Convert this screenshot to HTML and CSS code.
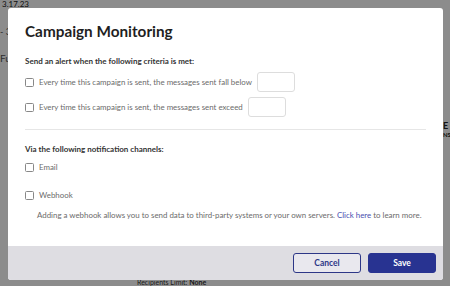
FILE: index.html
```html
<!DOCTYPE html>
<html>
<head>
<meta charset="utf-8">
<link rel="stylesheet" href="styles.css">
</head>
<body>
<div class="page">
  <div class="bg-date">3.17.23</div>
  <div class="bg-tab">- 3</div>
  <div class="bg-fu">Fu</div>
  <div class="bg-right">
    <div class="bg-e">E</div>
    <div class="bg-ns">NS</div>
  </div>
  <div class="bg-limit">Recipients Limit: <b>None</b></div>
</div>
<div class="overlay"></div>
<div class="modal">
  <div class="modal-body">
    <h1 class="title">Campaign Monitoring</h1>
    <p class="label">Send an alert when the following criteria is met:</p>
    <label class="row">
      <span class="box"></span>
      <span class="text">Every time this campaign is sent, the messages sent fall below</span>
      <span class="input"></span>
    </label>
    <label class="row">
      <span class="box"></span>
      <span class="text">Every time this campaign is sent, the messages sent exceed</span>
      <span class="input"></span>
    </label>
    <hr class="divider">
    <p class="label label2">Via the following notification channels:</p>
    <label class="row chan">
      <span class="box"></span>
      <span class="text">Email</span>
    </label>
    <label class="row chan">
      <span class="box"></span>
      <span class="text">Webhook</span>
    </label>
    <p class="help">Adding a webhook allows you to send data to third-party systems or your own servers. <a class="link">Click here</a> to learn more.</p>
  </div>
  <div class="modal-footer">
    <button class="btn btn-cancel">Cancel</button>
    <button class="btn btn-save">Save</button>
  </div>
</div>
</body>
</html>
```
FILE: styles.css
```css
html, body {
  margin: 0;
  padding: 0;
  width: 450px;
  height: 286px;
  overflow: hidden;
  font-family: "Lato", "Inter", sans-serif;
}
.page {
  position: relative;
  width: 450px;
  height: 286px;
  background: #fff;
  color: #222;
  font-size: 9px;
}
.bg-date { position: absolute; left: 2px; top: 0; font-size: 8px; line-height: 8px; }
.bg-tab { position: absolute; left: 0; top: 26px; font-size: 9px; color: #555; }
.bg-fu { position: absolute; left: 0; top: 52px; font-size: 10px; color: #555; }
.bg-right { position: absolute; left: 443px; top: 120px; font-weight: 700; font-size: 9px; }
.bg-ns { font-size: 6px; }
.bg-limit { position: absolute; left: 137px; top: 278px; font-size: 7px; color: #333; }
.overlay {
  position: absolute;
  inset: 0;
  background: rgba(0, 0, 0, 0.45);
}
.modal {
  position: absolute;
  left: 8px;
  top: 8px;
  width: 435px;
  height: 272px;
  background: #fff;
  border-radius: 3px;
  display: flex;
  flex-direction: column;
  overflow: hidden;
}
.modal-body {
  flex: 1;
  padding: 12px 17px 0 17px;
}
.title {
  margin: 0;
  font-size: 15.3px;
  font-weight: 700;
  color: #1f1f1f;
  line-height: 22px;
}
.label {
  margin: 13px 0 0;
  font-size: 8px;
  font-weight: 700;
  color: #333;
  line-height: 12px;
}
.label2 { margin-top: 13px; }
.row {
  display: flex;
  align-items: center;
  gap: 5px;
  font-size: 7.9px;
  color: #6b6b6b;
  height: 20px;
  margin-top: 5px;
}
.box {
  width: 7px;
  height: 7px;
  border: 1px solid #888;
  border-radius: 1.5px;
  background: #fff;
}
.input {
  width: 36px;
  height: 18px;
  border: 1px solid #ddd;
  border-radius: 3px;
}
.divider {
  border: 0;
  border-top: 1px solid #e6e6e6;
  margin: 12px 0 0;
  width: 401px;
}
.chan { margin-top: 3px; height: 18px; }
.chan + .chan { margin-top: 10px; }
.help {
  margin: 5px 0 0 12px;
  font-size: 7.9px;
  color: #6b6b6b;
  line-height: 12px;
  white-space: nowrap;
}
.link { color: #4a4fb0; }
.modal-footer {
  height: 34px;
  background: #dedde2;
  display: flex;
  justify-content: flex-end;
  align-items: center;
  gap: 7px;
  padding: 0 7px;
}
.btn {
  width: 68px;
  height: 20px;
  border-radius: 3px;
  font-family: inherit;
  font-size: 8.5px;
  font-weight: 700;
}
.btn-cancel {
  background: #e9e8ee;
  border: 1px solid #2d3787;
  color: #2d3787;
}
.btn-save {
  background: #283391;
  border: 1px solid #283391;
  color: #fff;
}
```
